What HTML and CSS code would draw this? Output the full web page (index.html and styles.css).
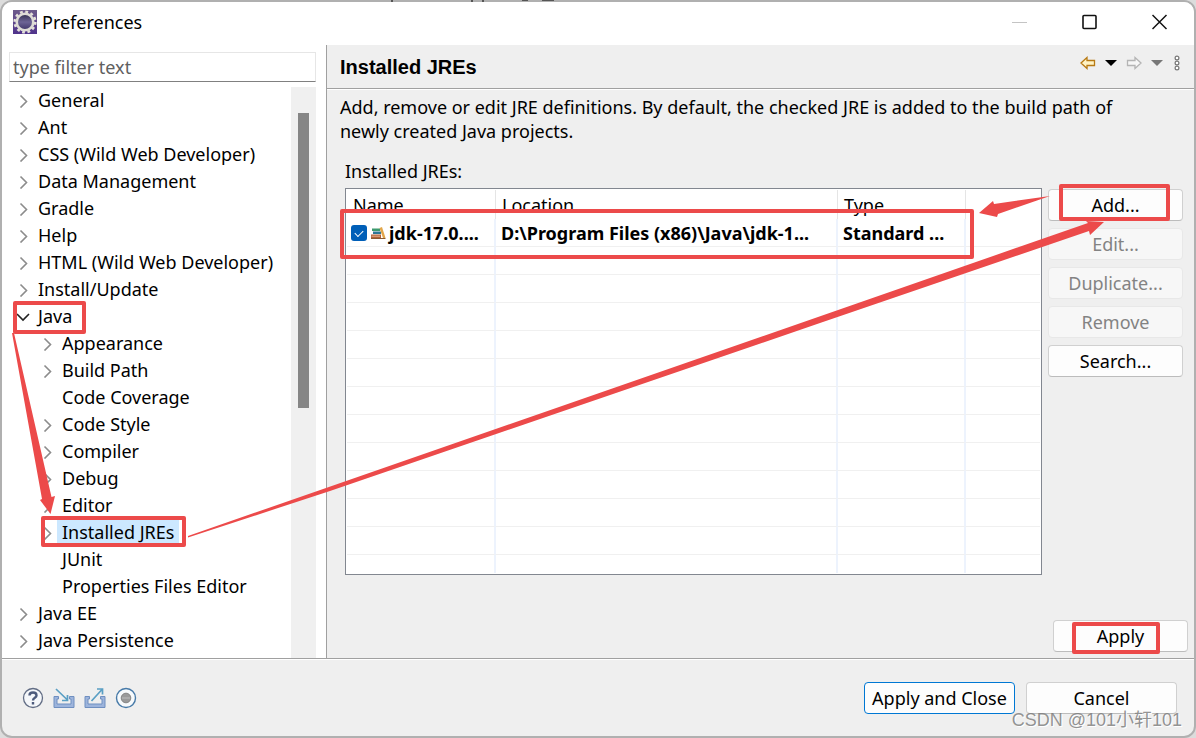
FILE: index.html
```html
<!DOCTYPE html>
<html lang="en">
<head>
    <meta charset="UTF-8">
    <meta name="viewport" content="width=device-width, initial-scale=1.0">
    <title>Preferences</title>
    <link rel="stylesheet" href="styles.css">
</head>
<body>
    <svg class="symbols" width="0" height="0" aria-hidden="true">
        <symbol id="chevron" viewBox="0 0 16 16"><path d="M5.500 3.500L11.500 9.500L5.500 15.500" fill="none" stroke="#8c8c8c" stroke-width="1.600"/></symbol>
        <symbol id="chevron-open" viewBox="0 0 16 16"><path d="M2 6L8 12L14 6" fill="none" stroke="#222" stroke-width="1.600"/></symbol>
    </svg>

    <div class="window">
        <header class="titlebar">
            <svg class="app-icon" width="24" height="24" viewBox="0 0 24 24">
                <defs>
                    <linearGradient id="purple" x1="0" y1="0" x2="0" y2="1">
                        <stop offset="0" stop-color="#6d5b8a"/>
                        <stop offset="1" stop-color="#50338c"/>
                    </linearGradient>
                    <linearGradient id="lens" x1="0" y1="0" x2="0" y2="1">
                        <stop offset="0" stop-color="#2f2c4a"/>
                        <stop offset=".5" stop-color="#6d6496"/>
                        <stop offset="1" stop-color="#3c3266"/>
                    </linearGradient>
                </defs>
                <rect width="24" height="24" fill="url(#purple)"/>
                <circle cx="12" cy="12" r="10.300" fill="none" stroke="#e4e2da" stroke-width="2.600" stroke-dasharray="2.800 2.593"/>
                <circle cx="12" cy="12" r="8.300" fill="url(#lens)" stroke="#dedcd6" stroke-width="2.600"/>
            </svg>
            <h1>Preferences</h1>
            <div class="window-controls">
                <button type="button" aria-label="Minimize" disabled><svg width="16" height="16" viewBox="0 0 16 16"><path d="M0 8.500H15" stroke="#c4c4c4"/></svg></button>
                <button type="button" aria-label="Maximize"><svg width="16" height="16" viewBox="0 0 16 16"><rect x="1" y="1.500" width="13" height="13" rx="1" fill="none" stroke="#111" stroke-width="1.600"/></svg></button>
                <button type="button" aria-label="Close"><svg width="16" height="16" viewBox="0 0 16 16"><path d="M.500 1L14.500 15M14.500 1L.500 15" stroke="#111" stroke-width="1.500"/></svg></button>
            </div>
        </header>

        <div class="main">
            <aside class="sidebar">
                <input type="text" class="filter" aria-label="Filter" placeholder="type filter text">
                <div class="tree-area">
                    <ul class="tree">
                        <li><svg><use href="#chevron"/></svg><span>General</span></li>
                        <li><svg><use href="#chevron"/></svg><span>Ant</span></li>
                        <li><svg><use href="#chevron"/></svg><span>CSS (Wild Web Developer)</span></li>
                        <li><svg><use href="#chevron"/></svg><span>Data Management</span></li>
                        <li><svg><use href="#chevron"/></svg><span>Gradle</span></li>
                        <li><svg><use href="#chevron"/></svg><span>Help</span></li>
                        <li><svg><use href="#chevron"/></svg><span>HTML (Wild Web Developer)</span></li>
                        <li><svg><use href="#chevron"/></svg><span>Install/Update</span></li>
                        <li><svg><use href="#chevron-open"/></svg><span>Java</span></li>
                        <li class="child"><svg><use href="#chevron"/></svg><span>Appearance</span></li>
                        <li class="child"><svg><use href="#chevron"/></svg><span>Build Path</span></li>
                        <li class="child"><svg></svg><span>Code Coverage</span></li>
                        <li class="child"><svg><use href="#chevron"/></svg><span>Code Style</span></li>
                        <li class="child"><svg><use href="#chevron"/></svg><span>Compiler</span></li>
                        <li class="child"><svg><use href="#chevron"/></svg><span>Debug</span></li>
                        <li class="child"><svg><use href="#chevron"/></svg><span>Editor</span></li>
                        <li class="child selected"><svg><use href="#chevron"/></svg><span>Installed JREs</span></li>
                        <li class="child"><svg></svg><span>JUnit</span></li>
                        <li class="child"><svg></svg><span>Properties Files Editor</span></li>
                        <li><svg><use href="#chevron"/></svg><span>Java EE</span></li>
                        <li><svg><use href="#chevron"/></svg><span>Java Persistence</span></li>
                    </ul>
                    <div class="scrollbar"><div class="thumb"></div></div>
                </div>
            </aside>

            <section class="page">
                <div class="page-header">
                    <h2>Installed JREs</h2>
                    <div class="history">
                        <button type="button" aria-label="Back"><svg width="16" height="14" viewBox="0 0 16 14"><path d="M1 7L7 1.500V4.500H14.500V9.500H7V12.500Z" fill="#fff3c4" stroke="#b87a14" stroke-width="1.300"/></svg></button>
                        <button type="button" aria-label="Back menu"><svg width="12" height="14" viewBox="0 0 12 14"><path d="M0 4H12L6 10Z" fill="#000"/></svg></button>
                        <button type="button" aria-label="Forward"><svg width="16" height="14" viewBox="0 0 16 14"><path d="M15 7L9 1.500V4.500H1.500V9.500H9V12.500Z" fill="#f6f6f6" stroke="#b4b4b4" stroke-width="1.300"/></svg></button>
                        <button type="button" aria-label="Forward menu"><svg width="12" height="14" viewBox="0 0 12 14"><path d="M0 4H12L6 10Z" fill="#777"/></svg></button>
                        <button type="button" aria-label="View menu"><svg width="10" height="16" viewBox="0 0 10 16"><g fill="#fff" stroke="#777" stroke-width="1.200"><circle cx="5" cy="3" r="1.900"/><circle cx="5" cy="8" r="1.900"/><circle cx="5" cy="13" r="1.900"/></g></svg></button>
                    </div>
                </div>

                <div class="page-body">
                    <p class="description">Add, remove or edit JRE definitions. By default, the checked JRE is added to the build path of newly created Java projects.</p>
                    <p class="table-label" id="jres">Installed JREs:</p>
                    <div class="jre-area">
                        <div class="table-box">
                            <table aria-labelledby="jres">
                                <colgroup>
                                    <col class="col-name"><col class="col-location"><col class="col-type"><col>
                                </colgroup>
                                <thead>
                                    <tr><th>Name</th><th>Location</th><th>Type</th><th></th></tr>
                                </thead>
                                <tbody>
                                    <tr class="jre">
                                        <td>
                                            <div class="name-cell">
                                                <input type="checkbox" aria-label="jdk-17.0" checked>
                                                <svg width="16" height="16" viewBox="0 0 16 16">
                                                    <rect x="2" y="3.500" width="8" height="2.500" fill="#3d9a6e"/>
                                                    <rect x="3" y="6.500" width="8" height="2.500" fill="#2d7796"/>
                                                    <rect x="1" y="9.500" width="10" height="3.500" fill="#b0603a"/>
                                                    <path d="M1.500 11.200H10" stroke="#e5b48c"/>
                                                    <path d="M9.500 3L12 2L15.500 13H13Z" fill="#e2a64a"/>
                                                    <path d="M1 13.500H15.500" stroke="#8a5a30"/>
                                                </svg>
                                                <span>jdk-17.0....</span>
                                            </div>
                                        </td>
                                        <td>D:\Program Files (x86)\Java\jdk-1...</td>
                                        <td>Standard ...</td>
                                        <td></td>
                                    </tr>
                                    <tr><td></td><td></td><td></td><td></td></tr>
                                    <tr><td></td><td></td><td></td><td></td></tr>
                                    <tr><td></td><td></td><td></td><td></td></tr>
                                    <tr><td></td><td></td><td></td><td></td></tr>
                                    <tr><td></td><td></td><td></td><td></td></tr>
                                    <tr><td></td><td></td><td></td><td></td></tr>
                                    <tr><td></td><td></td><td></td><td></td></tr>
                                    <tr><td></td><td></td><td></td><td></td></tr>
                                    <tr><td></td><td></td><td></td><td></td></tr>
                                    <tr><td></td><td></td><td></td><td></td></tr>
                                    <tr><td></td><td></td><td></td><td></td></tr>
                                    <tr class="last"><td></td><td></td><td></td><td></td></tr>
                                </tbody>
                            </table>
                        </div>
                        <div class="actions">
                            <button type="button" class="btn">Add...</button>
                            <button type="button" class="btn" disabled>Edit...</button>
                            <button type="button" class="btn" disabled>Duplicate...</button>
                            <button type="button" class="btn" disabled>Remove</button>
                            <button type="button" class="btn">Search...</button>
                        </div>
                    </div>
                </div>
                <div class="page-footer">
                    <button type="button" class="btn">Apply</button>
                </div>
            </section>
        </div>

        <footer class="footer">
            <div class="tools">
                <button type="button" aria-label="Help"><svg width="22" height="22" viewBox="0 0 22 22"><circle cx="11" cy="11" r="9.500" fill="#f5f7fa" stroke="#626d85" stroke-width="1.300"/><path d="M7.500 8.500C7.500 4.500 14.500 4.500 14.500 8.500C14.500 11 11 10.500 11 13.500M11 15V17.500" fill="none" stroke="#4d5b7c" stroke-width="2.400"/></svg></button>
                <button type="button" aria-label="Import"><svg width="22" height="22" viewBox="0 0 22 22"><path d="M5.500 9.500H1V20.500H21V9.500H16.500V12H18V17H4V12H5.500Z" fill="#9db4dc" stroke="#6f8fc0"/><path d="M3 2L14.500 13M14.500 8V13.500H9" fill="none" stroke="#5a9fc4" stroke-width="1.700"/></svg></button>
                <button type="button" aria-label="Export"><svg width="22" height="22" viewBox="0 0 22 22"><path d="M5.500 9.500H1V20.500H21V9.500H16.500V12H18V17H4V12H5.500Z" fill="#9db4dc" stroke="#6f8fc0"/><path d="M7.500 14L18 2.500M13 2H18.500V7.500" fill="none" stroke="#5a9fc4" stroke-width="1.700"/></svg></button>
                <button type="button" aria-label="Record"><svg width="22" height="22" viewBox="0 0 22 22"><circle cx="11" cy="11" r="9.500" fill="#f7fafc" stroke="#477aa8" stroke-width="1.400"/><circle cx="11" cy="11" r="4.800" fill="#9a9a9a" stroke="#858585"/><path d="M7 11H15" stroke="#acacac" stroke-width="2"/></svg></button>
            </div>
            <div class="dialog-buttons">
                <button type="button" class="btn wide primary">Apply and Close</button>
                <button type="button" class="btn wide">Cancel</button>
            </div>
        </footer>
    </div>

    <!-- Step markers drawn over the dialog -->
    <svg class="marks" width="1196" height="738" viewBox="0 0 1196 738" aria-hidden="true">
        <g fill="none" stroke="#ec4a4a" stroke-width="4" stroke-linejoin="round">
            <rect x="15" y="303" width="69" height="29"/>
            <rect x="43" y="518" width="141" height="27"/>
            <rect x="342" y="211" width="630" height="46"/>
            <rect x="1061" y="186" width="107" height="33"/>
            <rect x="1074" y="624" width="84" height="28"/>
        </g>
        <g fill="#ec4a4a">
            <path d="M12 333L14 333L51.500 497L55 496L50.500 514L40 500L42 499Z"/>
            <path d="M188 536L1088 223L1086 221L1104 222L1090 235L1089 231L820 323L330 491L188 537.500Z"/>
            <path d="M1050 196L994 204L993 201L979 213L997 217L998 214Z"/>
        </g>
        <g fill="#555">
            <rect x="391" y="0" width="2" height="2"/>
            <rect x="471" y="0" width="2" height="2"/>
            <rect x="482" y="0" width="2" height="2"/>
            <rect x="522" y="0" width="6" height="1"/>
            <rect x="542" y="0" width="12" height="1"/>
        </g>
    </svg>
    <div class="watermark">CSDN @101小轩101</div>
</body>
</html>
```
FILE: styles.css
```css
* {
    box-sizing: border-box;
    margin: 0;
    padding: 0;
}

body {
    position: relative;
    min-height: 100vh;
    display: flex;
    background: #dcdcdc;
    color: #000;
    font-family: 'Noto Sans', 'Noto Sans CJK SC', sans-serif;
    font-size: 18px;
    line-height: 24px;
}

button,
input {
    font: inherit;
    color: inherit;
}

button {
    border: none;
    background: none;
}

.symbols {
    position: absolute;
}

.window {
    flex: 1;
    display: flex;
    flex-direction: column;
    border: 2px solid #b0b0b0;
    border-radius: 12px;
    background: #efefef;
    overflow: hidden;
}

/* Title bar */
.titlebar {
    display: flex;
    align-items: center;
    height: 43px;
    padding: 0 26px 3px 11px;
    background: #fff;
}

.titlebar h1 {
    flex: 1;
    margin-left: 5px;
    font-size: 18px;
    font-weight: 400;
}

.window-controls {
    display: flex;
    gap: 54px;
}

.window-controls svg,
.history svg,
.tools svg,
.app-icon {
    display: block;
}

.main {
    flex: 1;
    display: flex;
}

/* Left side: filter and tree */
.sidebar {
    width: 325px;
    padding: 7px 10px 0 7px;
    display: flex;
    flex-direction: column;
    gap: 5px;
    background: #fff;
    border-right: 1px solid #a0a0a0;
}

.filter {
    width: 100%;
    height: 30px;
    padding: 0 3px;
    border: 1px solid #e6e6e6;
    border-bottom-color: #808080;
    outline: none;
}

.filter::placeholder {
    color: #606060;
    opacity: 1;
}

.tree-area {
    flex: 1;
    display: flex;
}

.tree {
    flex: 1;
    list-style: none;
    padding-left: 6px;
}

.tree li {
    display: flex;
    align-items: center;
    height: 27px;
    padding-bottom: 2px;
}

.tree svg {
    width: 16px;
    height: 16px;
}

.tree span {
    margin-left: 2px;
    padding: 0 5px;
    line-height: 26px;
    white-space: nowrap;
}

.tree .child {
    padding-left: 24px;
}

.tree .selected span {
    background: #cce8ff;
}

.scrollbar {
    width: 25px;
    padding: 26px 7px 0;
    background: #f0f0f0;
}

.thumb {
    height: 295px;
    background: #868686;
}

/* Right side: preference page */
.page {
    flex: 1;
    display: flex;
    flex-direction: column;
}

.page-header {
    display: flex;
    align-items: center;
    justify-content: space-between;
    height: 44px;
    padding: 0 12px 0 13px;
    border-bottom: 1px solid #a0a0a0;
    box-shadow: 0 1px 0 #fff;
}

.page-header h2 {
    font-family: 'Liberation Sans', sans-serif;
    font-size: 20px;
    font-weight: 700;
}

.history {
    display: flex;
    align-items: center;
    gap: 9px;
    padding-bottom: 8px;
}

.page-body {
    flex: 1;
    padding: 6px 11px 0 13px;
}

.description {
    padding-right: 30px;
}

.table-label {
    margin: 16px 0 5px 5px;
}

.jre-area {
    display: flex;
    gap: 6px;
    padding-left: 5px;
}

.table-box {
    flex: 1;
    padding: 1px;
    border: 1px solid #828790;
    background: #fff;
}

table {
    width: 100%;
    table-layout: fixed;
    border-collapse: separate;
    border-spacing: 0;
}

.col-name {
    width: 149px;
}

.col-location {
    width: 342px;
}

.col-type {
    width: 128px;
}

th {
    height: 29px;
    padding: 0 6px;
    border-right: 1px solid #e5e5e5;
    font-weight: 400;
    text-align: left;
}

td {
    height: 28px;
    padding: 0 5px;
    border-right: 2px solid #edf3fd;
    border-bottom: 1px solid #f0f0f0;
    white-space: nowrap;
}

th:last-child,
td:last-child {
    border-right: none;
}

.jre td {
    font-weight: 700;
}

.jre td:first-child {
    padding-left: 4px;
}

.last td {
    height: 18px;
    border-bottom: none;
}

.name-cell {
    display: flex;
    align-items: center;
    gap: 3px;
}

.name-cell input {
    appearance: none;
    display: grid;
    place-items: center;
    width: 16px;
    height: 16px;
    border-radius: 3px;
    background: #005fb8;
}

.name-cell input:checked::after {
    content: '';
    width: 7px;
    height: 4px;
    border: solid #fff;
    border-width: 0 0 1px 1px;
    transform: rotate(-45deg);
}

.actions {
    display: flex;
    flex-direction: column;
    gap: 7px;
    padding-top: 1px;
}

.btn {
    width: 135px;
    height: 32px;
    border: 1px solid #d0d0d0;
    border-bottom-color: #bcbcbc;
    border-radius: 4px;
    background: #fdfdfd;
    white-space: nowrap;
}

.btn:disabled {
    border-color: #e8e8e8;
    background: #f7f7f7;
    color: #838383;
}

.btn.wide {
    width: 151px;
}

.btn.primary {
    border-color: #0078d4;
}

.page-footer {
    display: flex;
    justify-content: flex-end;
    padding: 0 6px 6px;
}

/* Bottom bar */
.footer {
    display: flex;
    align-items: center;
    justify-content: space-between;
    height: 78px;
    padding: 0 17px 0 20px;
    border-top: 1px solid #a0a0a0;
    box-shadow: inset 0 1px 0 #fff;
}

.tools {
    display: flex;
    gap: 9px;
}

.dialog-buttons {
    display: flex;
    gap: 11px;
}

/* Overlays */
.marks {
    position: absolute;
    top: 0;
    left: 0;
    pointer-events: none;
}

.watermark {
    position: absolute;
    right: 14px;
    bottom: 6px;
    color: rgba(120, 120, 120, 0.8);
    font-family: 'Liberation Sans', 'Noto Sans CJK SC', sans-serif;
    font-size: 18px;
    text-shadow: 1px 1px 0 #fff;
    pointer-events: none;
}
```
